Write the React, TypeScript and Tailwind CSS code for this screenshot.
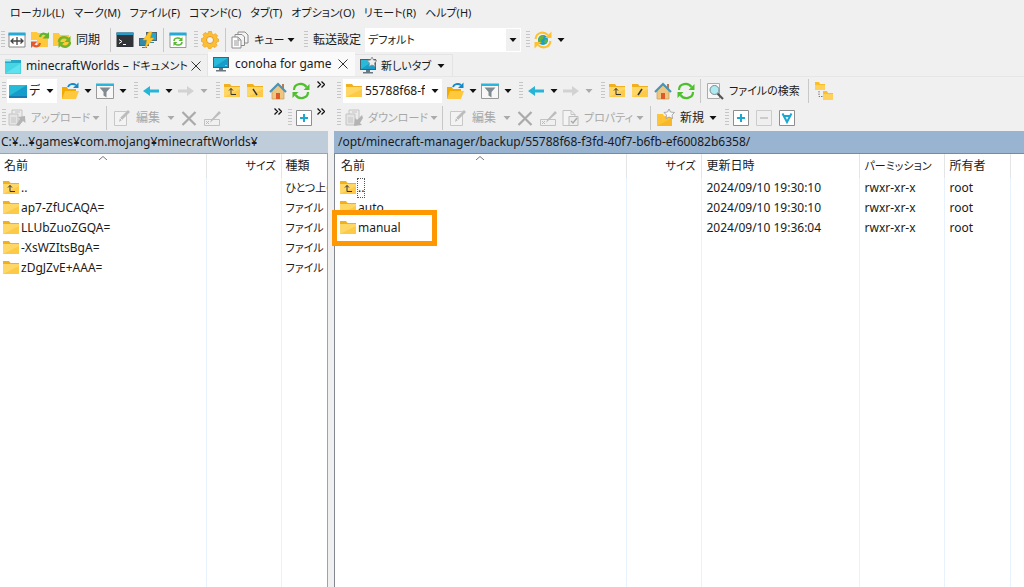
import type { ReactNode } from 'react';

const menus = [
  'ローカル(L)',
  'マーク(M)',
  'ファイル(F)',
  'コマンド(C)',
  'タブ(T)',
  'オプション(O)',
  'リモート(R)',
  'ヘルプ(H)'
];

const localFiles = ['ap7-ZfUCAQA=', 'LLUbZuoZGQA=', '-XsWZItsBgA=', 'zDgJZvE+AAA='];

const remoteFiles = [
  { name: '..', date: '2024/09/10 19:30:10' },
  { name: 'auto', date: '2024/09/10 19:30:10' },
  { name: 'manual', date: '2024/09/10 19:36:04' }
];

function Icon({ children }: { children: ReactNode }) {
  return (
    <svg viewBox="0 0 18 18" className="h-[18px] w-[18px] shrink-0" fill="none" aria-hidden="true">
      {children}
    </svg>
  );
}

function FolderShape() {
  return (
    <>
      <path d="M1 2h6l1.500 2H17v11H1z" fill="#f2b11c" />
      <path d="M1 5h16v10H1z" fill="#ffd766" />
      <path d="M1 15 17 7v8z" fill="#fdca48" />
    </>
  );
}

const FolderIcon = () => (
  <Icon>
    <FolderShape />
  </Icon>
);

const FolderUpIcon = () => (
  <Icon>
    <FolderShape />
    <path d="M8 6.500v6h5M6 8.500l2-2 2 2" stroke="#333" />
  </Icon>
);

const FolderRootIcon = ({ back = false }: { back?: boolean }) => (
  <Icon>
    <FolderShape />
    <path d={back ? 'M7 7l4 6' : 'M11 7l-4 6'} stroke="#333" strokeWidth="1.500" />
  </Icon>
);

const OpenFolderIcon = () => (
  <Icon>
    <path d="M1 5h5l1 2h8v10H1z" fill="#f2a900" />
    <path d="M4 9h14l-3 8H1z" fill="#ffc83d" />
    <path d="M7 5c1-3 5-4 8-2" stroke="#1788c7" strokeWidth="2" />
    <path d="M12 6h5.500V.5z" fill="#1788c7" />
  </Icon>
);

const FilterIcon = () => (
  <Icon>
    <path d="M.5 2.500h17v14H.5z" fill="#f7f7f7" stroke="#999" />
    <path d="M0 1.500h18V4H0z" fill="#29b6dd" />
    <path d="M3.500 5.500h11L10.500 10v5.500l-3-2V10z" fill="#808a90" />
  </Icon>
);

const CompareIcon = () => (
  <Icon>
    <path d="M1 2.500h16v13.500H1z" fill="#fff" stroke="#888" />
    <path d="M.5 1.500h17v3H.5z" fill="#26a9d4" />
    <path d="M9 6v8M3 10h12M5.500 7.500 3 10l2.500 2.500M12.500 7.500 15 10l-2.500 2.500" stroke="#444" strokeWidth="1.300" />
  </Icon>
);

const SyncFoldersIcon = () => (
  <Icon>
    <path d="M0 1h6l1 1h10v14H6V9H0z" fill="#ffc83d" />
    <path d="M9 6c1-4 4-4 7-2" stroke="#5cb531" strokeWidth="2.200" />
    <path d="M18 1v6.500h-6.500z" fill="#5cb531" />
    <path d="M9 12c-1 4-4 4-7 2" stroke="#e5572c" strokeWidth="2.200" />
    <path d="M0 17v-6.500h6.500z" fill="#e5572c" />
  </Icon>
);

const FolderSyncIcon = () => (
  <Icon>
    <path d="M0 2h6l1 2h9v11H0z" fill="#ffc83d" />
    <path d="M6 11c0-5 6-6 9-3M17 11c0 5-6 6-9 3" stroke="#72b52a" strokeWidth="2.500" />
    <path d="M17.500 5v6h-6zM5.500 17v-6h6z" fill="#72b52a" />
  </Icon>
);

const TerminalIcon = () => (
  <Icon>
    <path d="M.5 1.500h17v14.500H.5z" fill="#303438" />
    <path d="M.5 1.500h17V4H.5z" fill="#249bc8" />
    <path d="m3 8.500 3 2-3 2M7 13.500h3" stroke="#fff" />
  </Icon>
);

const PuttyIcon = () => (
  <Icon>
    <path d="M7 1h11v9H7z" fill="#4a6674" />
    <path d="M8 2h9v7H8z" fill="#22a6ce" />
    <path d="M0 7h10v8H0z" fill="#4a6674" />
    <path d="M1 8h8v6H1zM3 16h5v1H3zM11 11h4v1h-4z" fill="#318aaa" />
    <path d="m10 1-6 8h4l-2 8 9-10h-4l2-6z" fill="#ffc62a" stroke="#f7a600" strokeWidth=".5" />
  </Icon>
);

const RefreshWindowIcon = () => (
  <Icon>
    <path d="M1 2.500h16v14H1z" fill="#fff" stroke="#999" />
    <path d="M.5 1.500h17v3H.5z" fill="#26a9d4" />
    <path d="M5 10c0-3 4-4 7-2M13 11c0 3-4 4-7 2" stroke="#55b72c" strokeWidth="1.500" />
    <path d="M13.500 6v4h-4zM4.500 15v-4h4z" fill="#55b72c" />
  </Icon>
);

const GearIcon = () => (
  <Icon>
    <path
      d="M7.500.5h3l.5 2.500 1.500.7 2-1 2 2-1 2L16 7.500l1.500.5v2.500l-1.800.5-.7 1.500 1 2-2 2-2-1-1.500.5-.5 1.500H7.500L7 16l-1.500-.7-2 1-2-2 1-2L2 11l-1.500-.5v-3L2.300 7 3 5.500l-1-2 2-2 2 1L7 3z"
      fill="#fbbf35"
      stroke="#f09d16"
      strokeWidth=".7"
    />
    <circle cx="9" cy="9" r="3.500" fill="#f3f3f3" stroke="#e8951b" />
  </Icon>
);

const QueueIcon = () => (
  <Icon>
    <path d="M7 1h7l3 3v8H7z" fill="#f4f4f4" stroke="#8c8c8c" />
    <path d="M4 3.500h7l2.500 2.500v8.500H4z" fill="#f4f4f4" stroke="#8c8c8c" />
    <path d="M1 6h6l3 3v8H1z" fill="#fff" stroke="#8c8c8c" />
    <path d="M3 10h5M3 12h5M3 14h5M7 6v3h3" stroke="#999" />
  </Icon>
);

const GlobeIcon = () => (
  <Icon>
    <circle cx="9" cy="9" r="5" fill="#1c9ecb" />
    <path d="M5 6c2-2 4-2 5-1l-1 3-2 1 1 3-2 1-2-3zM11 8l3 1-2 4-2-2z" fill="#62b340" />
    <path d="M1.500 8c1-7 8-8 12.500-4M16.500 10c-1 7-8 8-12.500 4" stroke="#ffc12c" strokeWidth="2" />
    <path d="M17.500.5v6.500H11zM.5 17.500V11H7z" fill="#ffc12c" />
  </Icon>
);

const WindowIcon = () => (
  <Icon>
    <path d="M1 2h6v2h10v13H1z" fill="#45d5e4" />
    <path d="M1 2h6v2H1z" fill="#a9eff5" />
    <path d="M7 3h10v3H1V5h6z" fill="#26a9c4" />
    <path d="M2 16 16 7v9z" fill="#5fe2ed" />
  </Icon>
);

const MonitorIcon = ({ star = false }: { star?: boolean }) => (
  <Icon>
    <path d="M1 2h16v11H1z" fill="#46606c" />
    <path d="M2 3h14v9H2z" fill="#169dcb" />
    <path d="M2 12 16 3H2z" fill="#29bad9" />
    <path d="M7 13h4v2h3v1.500H4V15h3z" fill="#687981" />
    {star ? (
      <path d="m13 0 1.500 3 3.500.5-2.500 2.500.6 3.500L13 8 10 9.500l.5-3.500L8 3.500l3.500-.5z" fill="#eee" stroke="#888" strokeWidth=".8" />
    ) : (
      <path d="M13 10h2v1h-2z" fill="#a3dc2f" />
    )}
  </Icon>
);

const DesktopIcon = () => (
  <Icon>
    <path d="M0 3h18v13H0z" fill="#167cb4" />
    <path d="M0 3h18v11H0z" fill="#169cca" />
    <path d="M0 14 18 3H0z" fill="#27bbd7" />
  </Icon>
);

const ArrowIcon = ({ forward = false }: { forward?: boolean }) => (
  <Icon>
    {forward ? <path d="M1 7.500h9V4l7 5-7 5v-3.500H1z" fill="#d2d2d2" /> : <path d="M17 7.500H8V4L1 9l7 5v-3.500h9z" fill="#25b5d7" />}
  </Icon>
);

const HomeIcon = () => (
  <Icon>
    <path d="M3 9l6-6 6 6v8H3z" fill="#eec680" stroke="#c99b55" strokeWidth=".7" />
    <path d="M7 11h4v6H7z" fill="#df5a28" />
    <path d="M13 2h2v5h-2z" fill="#b97951" />
    <path d="m1 10 8-8 8 8" stroke="#4795b8" strokeWidth="2.200" />
  </Icon>
);

const RefreshIcon = () => (
  <Icon>
    <path d="M2 8C2 1.500 11 0 14.500 5M16 10c0 6.500-9 8-12.500 3" stroke="#4fc02d" strokeWidth="2.200" />
    <path d="M17.500 2v6h-6zM.5 16v-6h6z" fill="#4fc02d" />
  </Icon>
);

const TransferIcon = ({ down = false }: { down?: boolean }) => (
  <Icon>
    <path d="M4 1h10v10H4z" fill="#ececec" stroke="#c4c4c4" />
    <path d="M1 5h9v11H1zM3 9h5M3 11h5M3 13h5M7 3h5" fill="#e4e4e4" stroke="#c4c4c4" />
    {down ? <path d="m17 6-5 5-2-2-1 8 8-1-2-2 3-5z" fill="#b4b4b4" /> : <path d="m8 16 4-6-2-2 7-1 .5 7-2.500-2-4 5z" fill="#b4b4b4" />}
  </Icon>
);

const EditIcon = () => (
  <Icon>
    <path d="M1.500 2.500h12v14h-12z" fill="#f3f3f3" stroke="#c8c8c8" />
    <path d="m6 13 1-4 8-8 2 2-8 8z" fill="#bcbcbc" />
    <path d="m7 9 2 2" stroke="#eee" />
  </Icon>
);

const DeleteIcon = () => (
  <Icon>
    <path d="m2.500 3 13 13m0-13-13 13" stroke="#aaa" strokeWidth="2.200" />
  </Icon>
);

const RenameIcon = () => (
  <Icon>
    <path d="M1.500 10.500h15v6h-15z" stroke="#c2c2c2" />
    <path d="m3 12 3 3m0-3-3 3" stroke="#bbb" />
    <path d="m7 14 1-3 8-9 2 2-9 8z" fill="#bdbdbd" />
  </Icon>
);

const PropertiesIcon = () => (
  <Icon>
    <path d="M2 1.500h8l4 4v11H2z" fill="#f4f4f4" stroke="#c2c2c2" />
    <path d="M10 1.500v4h4" stroke="#c2c2c2" />
    <path d="M8 7.500h9v9H8z" fill="#ededed" stroke="#bbb" />
    <path d="m10 12 2 2 4-5" stroke="#aaa" strokeWidth="1.500" />
  </Icon>
);

const FindIcon = () => (
  <Icon>
    <path d="M1.500 1.500h12v15h-12z" fill="#f8f8f8" stroke="#aaa" />
    <path d="m11 11 6 6" stroke="#555" strokeWidth="2.200" />
    <circle cx="8.500" cy="8" r="4.500" fill="#aeeaf2" stroke="#7b8c92" />
  </Icon>
);

const TreeIcon = () => (
  <Icon>
    <path d="M0 0h4l1 2h5v6H0zM8 9h4l1 2h5v7H8z" fill="#fabe27" />
    <path d="M0 3h10v5H0zM8 12h10v6H8z" fill="#ffd05a" />
    <path d="M4 9v5.500h4" stroke="#777" strokeDasharray="1.500 1" />
  </Icon>
);

const NewFolderIcon = () => (
  <Icon>
    <path d="M0 5h6l1 2h8v10H0z" fill="#ffc436" />
    <path d="M0 17 15 9v8z" fill="#f8b62a" />
    <path d="m12 0 1.500 3 4 .5-2.500 2.500.6 3.500L12 8 9 9.500 9.500 6 7 3.500l3.500-.5z" fill="#f8f8f8" stroke="#999" strokeWidth=".8" />
  </Icon>
);

const BoxIcon = ({ kind }: { kind: 'plus' | 'minus' | 'filter' }) => (
  <Icon>
    <path d="M1.500 1.500h15v15h-15z" fill={kind === 'minus' ? '#efefef' : '#fff'} stroke={kind === 'minus' ? '#ccc' : '#8e8e8e'} />
    {kind === 'plus' && <path d="M9 5v8M5 9h8" stroke="#1aa7d0" strokeWidth="2" />}
    {kind === 'minus' && <path d="M5 9h8" stroke="#ccc" strokeWidth="2" />}
    {kind === 'filter' && <path d="m4.500 4.500 4.500 8.500 4.500-8.500M6 7h6" stroke="#1aa7d0" strokeWidth="2" />}
  </Icon>
);

function Caret({ muted = false }: { muted?: boolean }) {
  return (
    <svg viewBox="0 0 8 4" className="h-1 w-2 shrink-0" aria-hidden="true">
      <path d="M.5 0h7L4 4z" fill={muted ? '#aaa' : '#111'} />
    </svg>
  );
}

function Close() {
  return (
    <svg viewBox="0 0 10 10" className="h-[10px] w-[10px]" aria-hidden="true">
      <path d="m.5.5 9 9m0-9-9 9" stroke="#333" />
    </svg>
  );
}

function Grip() {
  return (
    <svg viewBox="0 0 4 18" className="h-[18px] w-1 shrink-0" aria-hidden="true">
      <path d="M2 0v18" stroke="#c6c6c6" strokeWidth="4" strokeDasharray="1 2" />
    </svg>
  );
}

const Sep = () => <span className="h-6 w-px shrink-0 bg-[#c8c8c8]" />;

function Tool({ label, children }: { label: string; children: ReactNode }) {
  return (
    <button type="button" aria-label={label} className="flex h-6 w-[23px] shrink-0 items-center justify-center">
      {children}
    </button>
  );
}

function SplitTool({ label, muted, children }: { label: string; muted?: boolean; children: ReactNode }) {
  return (
    <button type="button" aria-label={label} className="flex h-6 w-[35px] shrink-0 items-center justify-between pl-[2px]">
      {children}
      <span className="flex w-3 justify-center">
        <Caret muted={muted} />
      </span>
    </button>
  );
}

interface TextToolProps {
  icon: ReactNode;
  text: string;
  className: string;
  muted?: boolean;
  caret?: boolean;
}

function TextTool({ icon, text, className, muted, caret }: TextToolProps) {
  return (
    <button type="button" className={`flex h-6 shrink-0 items-center whitespace-nowrap pl-[2px] ${className} ${muted ? 'text-[#a8a8a8]' : ''}`}>
      {icon}
      <span className="ml-[5px] flex-1 text-left">{text}</span>
      {caret && (
        <span className="flex w-3 justify-center">
          <Caret muted={muted} />
        </span>
      )}
    </button>
  );
}

function Drive({ label, value, icon, className }: { label: string; value: string; icon: ReactNode; className: string }) {
  return (
    <label className={`flex h-6 shrink-0 items-center bg-white pl-[2px] ${className}`}>
      {icon}
      <select aria-label={label} className="mr-[3px] ml-[2px] min-w-0 flex-1 appearance-none bg-transparent">
        <option>{value}</option>
      </select>
      <span className="flex w-[14px] justify-center">
        <Caret />
      </span>
    </label>
  );
}

function NavTools({ remote = false }: { remote?: boolean }) {
  return (
    <>
      <div className="ml-[2px] flex">
        <SplitTool label="ディレクトリを開く">
          <OpenFolderIcon />
        </SplitTool>
        <SplitTool label="フィルタ">
          <FilterIcon />
        </SplitTool>
      </div>
      <div className="ml-[5px] flex items-center gap-[2px]">
        <Grip />
        <div className="flex">
          <SplitTool label="戻る">
            <ArrowIcon />
          </SplitTool>
          <SplitTool label="進む" muted>
            <ArrowIcon forward />
          </SplitTool>
        </div>
      </div>
      <div className="ml-[6px] flex items-center">
        <Grip />
        <Tool label="親ディレクトリ">
          <FolderUpIcon />
        </Tool>
        <Tool label="ルートディレクトリ">
          <FolderRootIcon back={!remote} />
        </Tool>
        <Tool label="ホーム">
          <HomeIcon />
        </Tool>
        <Tool label="更新">
          <RefreshIcon />
        </Tool>
      </div>
    </>
  );
}

const More = () => (
  <button type="button" aria-label="その他" className="flex h-6 w-[10px] items-start">
    <svg viewBox="0 0 8 7" className="mt-[2px] h-[7px] w-2" fill="none" aria-hidden="true">
      <path d="m.5.5 3 3-3 3M4.500.5l3 3-3 3" stroke="#111" strokeWidth="1.300" />
    </svg>
  </button>
);

function Th({ children, className = '', sorted }: { children?: ReactNode; className?: string; sorted?: boolean }) {
  return (
    <th className={`relative h-6 border-r border-[#e5e5e5] font-normal ${className}`}>
      {sorted && (
        <svg viewBox="0 0 8 4" className="absolute top-[2px] left-1/2 h-1 w-2 -translate-x-1/2" fill="none" aria-hidden="true">
          <path d="m0 4 4-3.500L8 4" stroke="#777" />
        </svg>
      )}
      {children}
    </th>
  );
}

function Td({ children, className = '' }: { children?: ReactNode; className?: string }) {
  return <td className={`h-5 border-r border-[#e8f2fc] p-0 whitespace-nowrap ${className}`}>{children}</td>;
}

// empty last row carries the column lines down to the bottom of the list
function FillRow({ columns }: { columns: number }) {
  return (
    <tr className="h-full">
      {Array.from({ length: columns }, (_, index) => (
        <Td key={index} />
      ))}
    </tr>
  );
}

function LocalPanel() {
  return (
    <section className="flex w-[328px] shrink-0 flex-col">
      <div className="flex h-[27px] items-center pl-[2px]">
        <Grip />
        <Drive label="ローカルドライブ" value="デスクトップ" icon={<DesktopIcon />} className="ml-[1px] w-[50px]" />
        <NavTools />
        <div className="ml-[5px]">
          <More />
        </div>
      </div>
      <div className="flex h-[27px] items-center pl-[2px]">
        <Grip />
        <TextTool icon={<TransferIcon />} text="アップロード" muted caret className="w-[96px] text-[11px]" />
        <div className="ml-1 flex items-center gap-1">
          <Sep />
          <TextTool icon={<EditIcon />} text="編集" muted caret className="w-[66px]" />
        </div>
        <Tool label="削除">
          <DeleteIcon />
        </Tool>
        <Tool label="名前の変更">
          <RenameIcon />
        </Tool>
        <div className="ml-auto flex items-center pr-[1px]">
          <More />
          <span className="mr-[2px] ml-1 flex items-center">
            <Grip />
            <Tool label="選択">
              <BoxIcon kind="plus" />
            </Tool>
          </span>
          <More />
        </div>
      </div>
      <div className="h-[22px] truncate bg-[#bfcddb] pl-[1px] leading-[22px]">C:¥...¥games¥com.mojang¥minecraftWorlds¥</div>
      <div className="flex flex-1 flex-col overflow-hidden border-t border-r border-[#9ca3aa] bg-white">
        <table className="w-[420px] flex-1 table-fixed border-collapse text-left">
          <colgroup>
            <col className="w-[206px]" />
            <col className="w-[75px]" />
            <col />
          </colgroup>
          <thead>
            <tr>
              <Th className="pl-1" sorted>
                名前
              </Th>
              <Th className="pr-[5px] text-right text-[11px]">サイズ</Th>
              <Th className="pl-1">種類</Th>
            </tr>
          </thead>
          <tbody>
            <tr>
              <Td className="pl-[2px]">
                <span className="flex items-center gap-[1px]">
                  <FolderUpIcon />
                  ..
                </span>
              </Td>
              <Td />
              <Td className="pl-1 text-[11px]">ひとつ上のディレクトリ</Td>
            </tr>
            {localFiles.map((name) => (
              <tr key={name}>
                <Td className="pl-[2px]">
                  <span className="flex items-center gap-[1px]">
                    <FolderIcon />
                    {name}
                  </span>
                </Td>
                <Td />
                <Td className="pl-1 text-[11px]">ファイル フォルダー</Td>
              </tr>
            ))}
            <FillRow columns={3} />
          </tbody>
        </table>
      </div>
    </section>
  );
}

function RemotePanel() {
  return (
    <section className="flex min-w-0 flex-1 flex-col">
      <div className="flex h-[27px] items-center pl-[3px]">
        <Grip />
        <Drive
          label="リモートディレクトリ"
          value="55788f68-f3fd-40f7-b6fb-ef60082b6358"
          icon={<FolderIcon />}
          className="ml-[2px] w-[99px]"
        />
        <NavTools remote />
        <div className="ml-[3px] flex items-center gap-[3px]">
          <Sep />
          <TextTool icon={<FindIcon />} text="ファイルの検索" className="w-[101px] text-[11px]" />
          <Sep />
          <Tool label="ツリー">
            <TreeIcon />
          </Tool>
        </div>
      </div>
      <div className="flex h-[27px] items-center pl-[3px]">
        <Grip />
        <TextTool icon={<TransferIcon down />} text="ダウンロード" muted caret className="ml-[2px] w-[96px] text-[11px]" />
        <div className="ml-[3px] flex items-center gap-1">
          <Sep />
          <TextTool icon={<EditIcon />} text="編集" muted caret className="w-[66px]" />
        </div>
        <Tool label="削除">
          <DeleteIcon />
        </Tool>
        <Tool label="名前の変更">
          <RenameIcon />
        </Tool>
        <TextTool icon={<PropertiesIcon />} text="プロパティ" muted caret className="w-[87px] text-[11px]" />
        <div className="ml-1 flex items-center gap-1">
          <Sep />
          <TextTool icon={<NewFolderIcon />} text="新規" caret className="w-[64px]" />
        </div>
        <div className="ml-[6px] flex items-center">
          <Grip />
          <Tool label="選択">
            <BoxIcon kind="plus" />
          </Tool>
          <Tool label="選択解除">
            <BoxIcon kind="minus" />
          </Tool>
          <Tool label="選択フィルタ">
            <BoxIcon kind="filter" />
          </Tool>
        </div>
      </div>
      <div className="h-[22px] truncate bg-[#99b4d1] pl-1 leading-[22px]">
        /opt/minecraft-manager/backup/55788f68-f3fd-40f7-b6fb-ef60082b6358/
      </div>
      <div className="flex flex-1 flex-col border-t border-l border-[#828790] bg-white">
        <table className="w-full flex-1 table-fixed border-collapse text-left">
          <colgroup>
            <col className="w-[291px]" />
            <col className="w-[75px]" />
            <col className="w-[158px]" />
            <col className="w-[85px]" />
            <col className="w-[66px]" />
            <col />
          </colgroup>
          <thead>
            <tr>
              <Th className="pl-[6px]" sorted>
                名前
              </Th>
              <Th className="pr-[5px] text-right text-[11px]">サイズ</Th>
              <Th className="pl-[5px]">更新日時</Th>
              <Th className="pl-[5px] text-[11px]">パーミッション</Th>
              <Th className="pl-[5px]">所有者</Th>
              <Th className="border-r-0" />
            </tr>
          </thead>
          <tbody>
            {remoteFiles.map((file) => (
              <tr key={file.name}>
                <Td className="relative pl-1">
                  <span className="flex items-center gap-[1px]">
                    {file.name === '..' ? <FolderUpIcon /> : <FolderIcon />}
                    <span className={file.name === '..' ? 'outline-1 outline-dotted outline-[#555]' : ''}>{file.name}</span>
                  </span>
                  {file.name === 'manual' && <span className="absolute -top-2 -left-[3px] z-10 h-9 w-[105px] border-5 border-[#ff9800]" />}
                </Td>
                <Td />
                <Td className="pl-[5px]">{file.date}</Td>
                <Td className="pl-[5px]">rwxr-xr-x</Td>
                <Td className="pl-[5px]">root</Td>
                <Td className="border-r-0" />
              </tr>
            ))}
            <FillRow columns={5} />
          </tbody>
        </table>
      </div>
    </section>
  );
}

export default function App() {
  return (
    <div className="flex min-h-screen flex-col bg-[#f0f0f0] [font-family:'Noto_Sans','Noto_Sans_CJK_JP',sans-serif] text-[12px] leading-[18px] text-[#1a1a1a] [font-feature-settings:'palt']">
      <nav className="flex h-[26px] items-center gap-[9px] pl-[10px] text-[11px]">
        {menus.map((menu) => (
          <button key={menu} type="button" className="whitespace-nowrap">
            {menu}
          </button>
        ))}
      </nav>

      <div className="flex h-[27px] items-center pl-[1px]">
        <Grip />
        <Tool label="比較">
          <CompareIcon />
        </Tool>
        <Tool label="同期フォルダ">
          <SyncFoldersIcon />
        </Tool>
        <TextTool icon={<FolderSyncIcon />} text="同期" className="w-[59px]" />
        <Sep />
        <div className="mr-[4px] ml-[2px] flex">
          <Tool label="ターミナル">
            <TerminalIcon />
          </Tool>
          <Tool label="PuTTY">
            <PuttyIcon />
          </Tool>
        </div>
        <Sep />
        <div className="mr-[5px] ml-[2px] flex">
          <Tool label="更新">
            <RefreshWindowIcon />
          </Tool>
        </div>
        <Grip />
        <div className="mr-[4px] flex">
          <Tool label="環境設定">
            <GearIcon />
          </Tool>
        </div>
        <Sep />
        <TextTool icon={<QueueIcon />} text="キュー" caret className="ml-[3px] w-[68px] text-[11px]" />
        <div className="ml-[7px] flex items-center gap-[5px]">
          <Grip />
          <label htmlFor="transfer">転送設定</label>
        </div>
        <div className="ml-1 flex h-6 w-[156px] items-center bg-white">
          <select id="transfer" className="min-w-0 flex-1 appearance-none bg-transparent pl-[3px] text-[11px]">
            <option>デフォルト</option>
          </select>
          <span className="mr-[1px] flex h-[22px] w-[14px] items-center justify-center bg-[#f0f0f0]">
            <Caret />
          </span>
        </div>
        <div className="ml-[5px] flex items-center gap-[2px]">
          <Grip />
          <SplitTool label="ブラウザ">
            <GlobeIcon />
          </SplitTool>
        </div>
      </div>

      <div className="flex h-6 items-end border-b border-[#e6e6e6]">
        <div className="flex h-[22px] w-[208px] items-center border-t border-r border-[#e4e4e4] pl-1">
          <WindowIcon />
          <a href="#" className="ml-1 flex-1 whitespace-nowrap">
            minecraftWorlds – <span className="text-[11px]">ドキュメント</span>
          </a>
          <button type="button" aria-label="閉じる" className="mr-[6px]">
            <Close />
          </button>
        </div>
        <div className="flex h-6 w-[147px] items-center bg-[#fafafa] pl-1">
          <MonitorIcon />
          <a href="#" className="ml-[5px] flex-1 whitespace-nowrap">
            conoha for game
          </a>
          <button type="button" aria-label="閉じる" className="mr-[7px]">
            <Close />
          </button>
        </div>
        <button type="button" className="flex h-[22px] w-[98px] items-center border-t border-r border-[#e4e4e4] pl-1 text-[11px]">
          <MonitorIcon star />
          <span className="ml-1 flex-1 text-left">新しいタブ</span>
          <span className="mr-[7px]">
            <Caret />
          </span>
        </button>
      </div>

      <main className="flex flex-1 gap-[6px]">
        <LocalPanel />
        <RemotePanel />
      </main>
    </div>
  );
}
